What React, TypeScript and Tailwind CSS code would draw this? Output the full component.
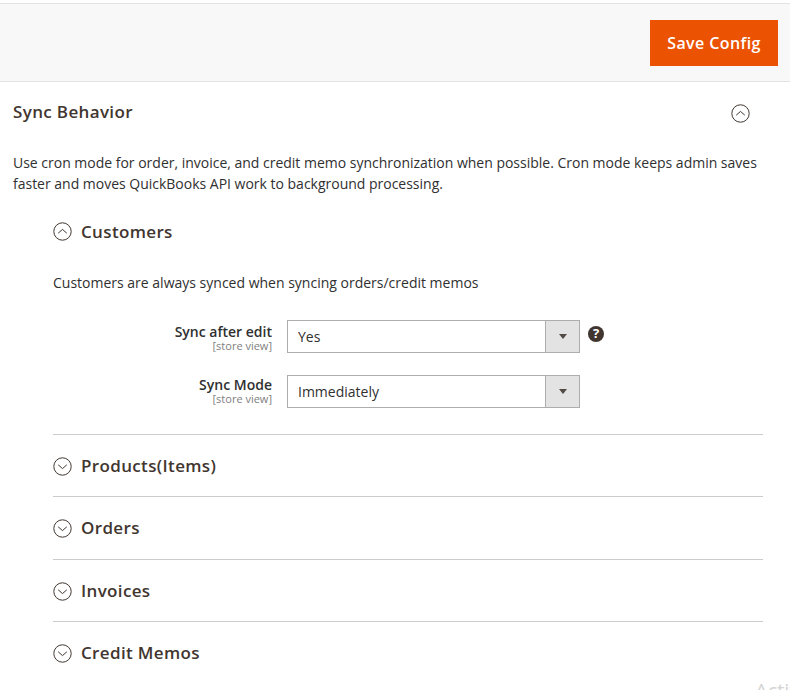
import { ReactNode } from "react";

const font = { fontFamily: '"Open Sans", sans-serif' };

function Chevron({ open, className }: { open?: boolean; className?: string }) {
  return (
    <svg viewBox="0 0 19 19" className={className} fill="none" stroke="#41362f" strokeWidth="1">
      <circle cx="9.5" cy="9.5" r="8.7" />
      <path d={open ? "M5.2 11.2 9.5 7.4l4.3 3.8" : "M5.2 7.8 9.5 11.6l4.3-3.8"} />
    </svg>
  );
}

function SelectRow({ label, value, help, labelClass }: { label: string; value: string; help?: boolean; labelClass: string }) {
  return (
    <div className="flex h-[33px] items-start">
      <div className={`w-[219px] text-right ${labelClass}`}>
        <div className="text-[14px] leading-[16px] font-semibold text-[#303030]">{label}</div>
        <div className="text-[11px] leading-[12px] text-[#808080]">[store view]</div>
      </div>
      <div className="ml-[15px] flex h-[33px] w-[293px] border border-[#adadad] bg-white">
        <div className="flex-1 pl-[10px] text-[14px] leading-[32px] text-[#303030]">{value}</div>
        <div className="flex w-[34px] items-center justify-center border-l border-[#adadad] bg-[#e3e3e3]">
          <div className="h-0 w-0 border-x-[4px] border-t-[5px] border-x-transparent border-t-[#514943]" />
        </div>
      </div>
      {help && (
        <div className="mt-[6px] ml-[8px] flex h-[16px] w-[16px] items-center justify-center rounded-full bg-[#41362f] text-[13px] leading-none font-bold text-white">
          ?
        </div>
      )}
    </div>
  );
}

function Section({ title, className = "border-b border-[#cccccc]", children }: { title: string; className?: string; children?: ReactNode }) {
  return (
    <div className={className}>
      <div className="flex h-[61px] items-center gap-[9px] pt-[2px]">
        <Chevron className="h-[19px] w-[19px]" />
        <span className="text-[17px] font-semibold tracking-[0.35px] text-[#41362f]">{title}</span>
      </div>
      {children}
    </div>
  );
}

export default function App() {
  return (
    <div className="relative h-[690px] w-[790px] overflow-hidden bg-white" style={font}>
      <div className="mt-[3px] flex h-[79px] items-start justify-end border-y border-[#e3e3e3] bg-[#f8f8f8] pt-[16px] pr-[12px]">
        <button className="h-[46px] w-[128px] bg-[#eb5202] text-[16px] font-semibold tracking-[0.4px] text-white">
          Save Config
        </button>
      </div>

      <div className="flex h-[62px] items-center justify-between pr-[40px] pl-[13px]">
        <span className="mb-[2px] text-[17px] font-semibold tracking-[0.35px] text-[#41362f]">Sync Behavior</span>
        <Chevron open className="h-[19px] w-[19px]" />
      </div>

      <p className="mt-[8px] pr-[20px] pl-[13px] text-[14px] leading-[21px] tracking-[-0.01px] text-[#303030]">
        Use cron mode for order, invoice, and credit memo synchronization when possible. Cron mode keeps admin saves faster and moves QuickBooks API work to background processing.
      </p>

      <div className="mr-[27px] ml-[53px]">
        <div className="mt-[25px] flex items-center gap-[9px]">
          <Chevron open className="h-[19px] w-[19px]" />
          <span className="text-[17px] font-semibold tracking-[0.35px] text-[#41362f]">Customers</span>
        </div>
        <p className="mt-[27px] text-[14px] leading-[21px] text-[#303030]">
          Customers are always synced when syncing orders/credit memos
        </p>
        <div className="mt-[27px] flex flex-col gap-[22px] pb-[26px]">
          <SelectRow label="Sync after edit" value="Yes" help labelClass="pt-[4px]" />
          <SelectRow label="Sync Mode" value="Immediately" labelClass="pt-[2px]" />
        </div>
        <div className="border-t border-[#cccccc]">
          <Section title="Products(Items)" />
          <Section title="Orders" className="border-b border-[#cccccc] pb-[1px]" />
          <Section title="Invoices" />
          <Section title="Credit Memos" className="" />
        </div>
      </div>

      <div className="absolute top-[681px] left-[755px] text-[20px] leading-[20px] whitespace-nowrap text-[#d4d4d4]">Activate</div>
    </div>
  );
}
